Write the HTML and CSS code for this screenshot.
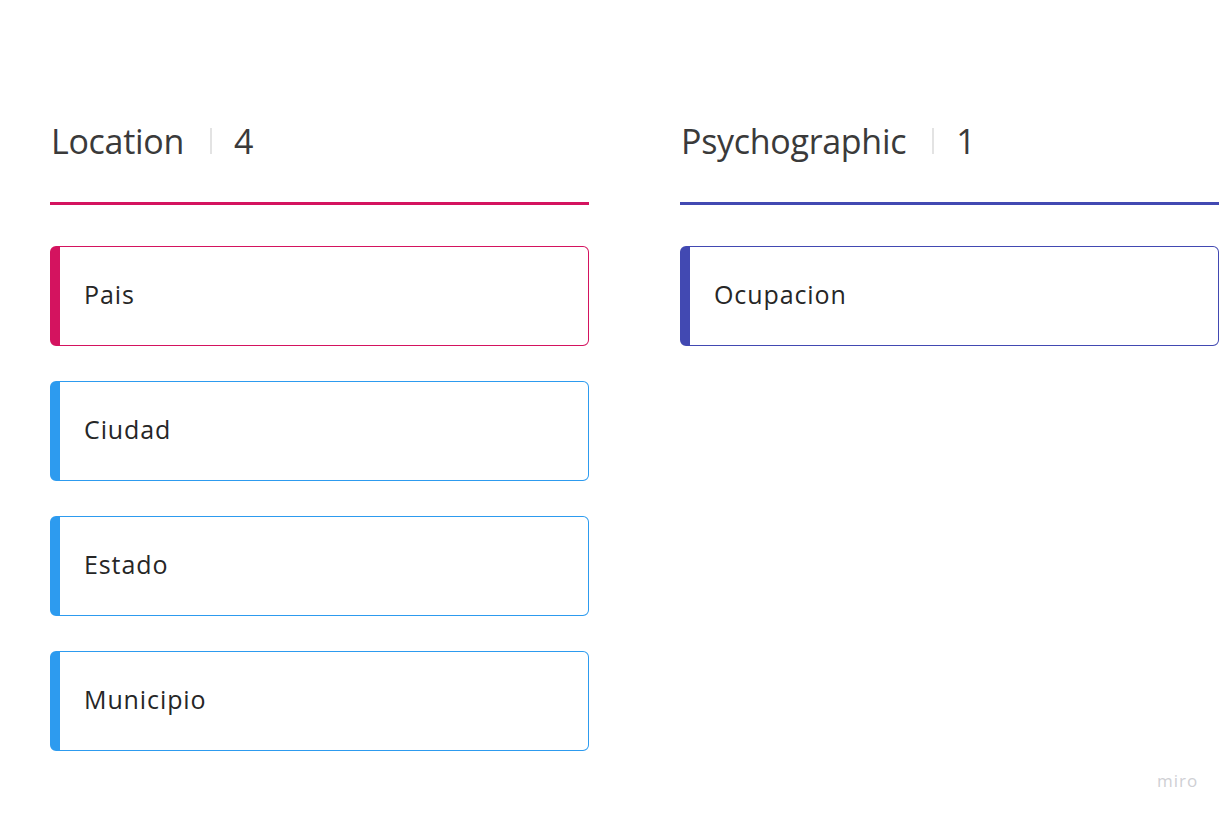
FILE: index.html
```html
<!DOCTYPE html>
<html>
<head>
<meta charset="utf-8">
<link rel="stylesheet" href="styles.css">
</head>
<body>
<div class="board">
  <section class="column column--pink">
    <header class="col-head">
      <span class="col-title">Location</span>
      <span class="col-sep"></span>
      <span class="col-count">4</span>
    </header>
    <div class="col-rule"></div>
    <div class="cards">
      <div class="card card--pink"><span>Pais</span></div>
      <div class="card card--blue"><span>Ciudad</span></div>
      <div class="card card--blue"><span>Estado</span></div>
      <div class="card card--blue"><span>Municipio</span></div>
    </div>
  </section>
  <section class="column column--indigo">
    <header class="col-head">
      <span class="col-title">Psychographic</span>
      <span class="col-sep"></span>
      <span class="col-count">1</span>
    </header>
    <div class="col-rule"></div>
    <div class="cards">
      <div class="card card--indigo"><span>Ocupacion</span></div>
    </div>
  </section>
</div>
<div class="brand">miro</div>
</body>
</html>
```

FILE: styles.css
```css
html, body {
  margin: 0;
  padding: 0;
  background: #ffffff;
  width: 1224px;
  height: 816px;
  overflow: hidden;
  font-family: "Open Sans", "Noto Sans", sans-serif;
  color: #333333;
}

.board {
  display: flex;
  gap: 91px;
  padding: 117px 0 0 50px;
}

.column {
  width: 539px;
  display: flex;
  flex-direction: column;
}

.col-head {
  display: flex;
  align-items: center;
  height: 48px;
  padding-left: 1px;
}

.col-title {
  font-size: 34px;
  letter-spacing: -0.3px;
  line-height: 48px;
  color: #3a3a3a;
}

.col-sep {
  width: 2px;
  height: 26px;
  background: #e3e3e3;
  margin: 0 22px 0 26px;
}

.col-count {
  font-size: 34px;
  line-height: 48px;
  color: #3a3a3a;
}

.col-rule {
  height: 3px;
  margin-top: 37px;
}

.column--pink .col-rule { background: #d4135f; }
.column--indigo .col-rule { background: #4249b2; }

.cards {
  display: flex;
  flex-direction: column;
  gap: 35px;
  margin-top: 41px;
}

.card {
  height: 100px;
  box-sizing: border-box;
  border: 1.5px solid;
  border-left-width: 10px;
  border-radius: 6px;
  display: flex;
  align-items: center;
  padding: 0 0 5px 24px;
  font-size: 25px;
  letter-spacing: 0.9px;
  color: #262626;
}

.card--pink { border-color: #d4135f; }
.card--blue { border-color: #2d9bef; }
.card--indigo { border-color: #4249b2; }

.brand {
  position: absolute;
  left: 1157px;
  top: 769px;
  font-size: 17px;
  letter-spacing: 1px;
  color: #cfcfd4;
}
```
